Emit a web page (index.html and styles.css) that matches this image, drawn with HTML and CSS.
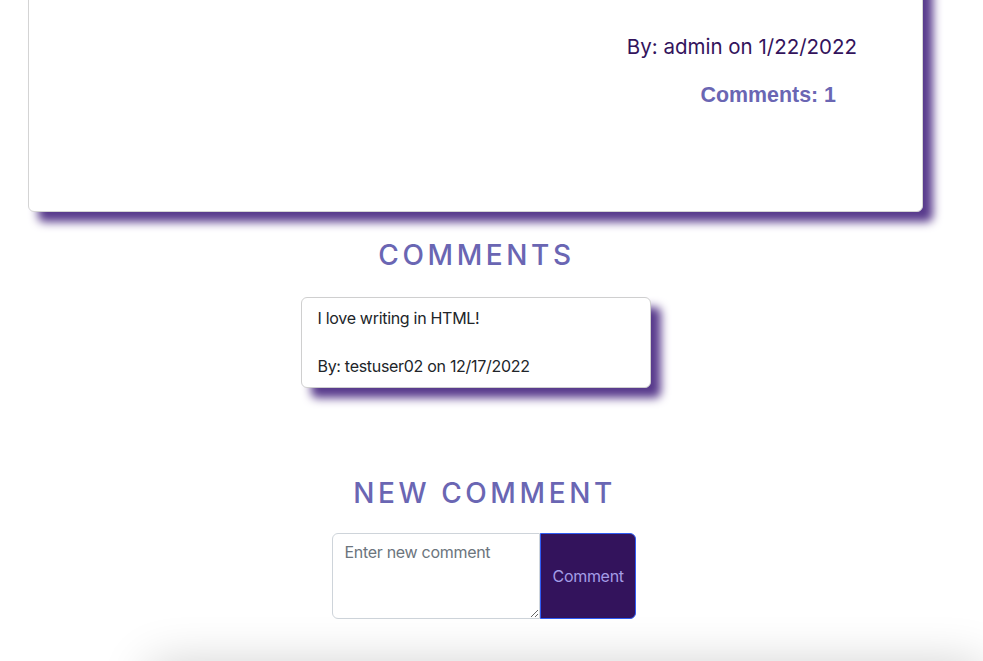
FILE: index.html
```html
<!DOCTYPE html>
<html lang="en">
<head>
<meta charset="utf-8">
<title>Post</title>
<link rel="stylesheet" href="styles.css">
</head>
<body>
<div class="page">
  <div class="container">
    <div class="post-card">
      <div class="post-meta">
        <p class="post-author">By: admin on 1/22/2022</p>
        <p class="comment-count">Comments: 1</p>
      </div>
    </div>
    <h3 class="section-title">COMMENTS</h3>
    <div class="comment-card">
      <p class="comment-text">I love writing in HTML!<br><br>By: testuser02 on 12/17/2022</p>
    </div>
  </div>
  <div class="new-comment">
    <h3 class="section-title">NEW COMMENT</h3>
    <form class="comment-form">
      <textarea class="comment-input" placeholder="Enter new comment"></textarea>
      <button type="button" class="comment-btn">Comment</button>
    </form>
  </div>
  <footer class="footer"></footer>
</div>
</body>
</html>
```

FILE: styles.css
```css
html, body {
  margin: 0;
  padding: 0;
  background: #fff;
}

body {
  font-family: Inter, "Liberation Sans", sans-serif;
  color: #212529;
  height: 661px;
  overflow: hidden;
}

.page {
  display: flex;
  flex-direction: column;
}

.container {
  margin: 0 60px 0 28px;
  display: flex;
  flex-direction: column;
  align-items: center;
}

.post-card {
  align-self: stretch;
  box-sizing: border-box;
  height: 252px;
  margin-top: -40px;
  padding: 71px 65px 0 0;
  background: #fff;
  border: 1px solid #d4d4d4;
  border-radius: 6px;
  box-shadow: 10px 10px 10px rgb(88, 58, 140);
  display: flex;
  justify-content: flex-end;
}

.post-meta {
  display: flex;
  flex-direction: column;
  align-items: flex-end;
}

.post-meta p {
  margin: 0;
  line-height: 30px;
}

.post-author {
  font-family: Inter, "Liberation Sans", sans-serif;
  font-size: 20.5px;
  color: #33135c;
}

.comment-count {
  margin-top: 18px !important;
  margin-right: 21px !important;
  font-family: "Liberation Sans", Arial, sans-serif;
  font-size: 21.4px;
  color: #6a66b3;
  font-weight: 700;
}

.section-title {
  margin: 26px 0 0;
  font-family: Inter, "Liberation Sans", sans-serif;
  font-size: 28px;
  line-height: 34px;
  font-weight: 500;
  letter-spacing: 3.6px;
  color: #6a66b3;
  text-align: center;
  padding-left: 2px;
}

.comment-card {
  box-sizing: border-box;
  width: 350px;
  margin-top: 25px;
  padding: 8px 16px 9px;
  background: #fff;
  border: 1px solid #cfcfcf;
  border-radius: 6px;
  box-shadow: 10px 10px 10px rgb(88, 58, 140);
}

.comment-text {
  margin: 0;
  font-size: 16px;
  line-height: 24px;
  letter-spacing: -0.3px;
  color: #212529;
}

.new-comment {
  margin: 0 44px 0 28px;
  display: flex;
  flex-direction: column;
  align-items: center;
}

.new-comment .section-title {
  margin-top: 88px;
}

.comment-form {
  display: flex;
  margin-top: 23px;
  height: 86px;
}

.comment-input {
  box-sizing: border-box;
  width: 208px;
  height: 86px;
  margin: 0;
  padding: 6px 12px;
  border: 1px solid #ced4da;
  border-radius: 6px 0 0 6px;
  font-family: Inter, "Liberation Sans", sans-serif;
  font-size: 16px;
  line-height: 24px;
  letter-spacing: -0.3px;
  color: #212529;
  resize: vertical;
  outline: none;
}

.comment-input::placeholder {
  color: #6c757d;
}

.comment-btn {
  box-sizing: border-box;
  width: 96px;
  height: 86px;
  margin: 0;
  padding: 6px 12px;
  background: #33135c;
  color: #a49de6;
  border: 1px solid #2f5cf5;
  border-radius: 0 6px 6px 0;
  font-family: Inter, "Liberation Sans", sans-serif;
  font-size: 16px;
  line-height: 24px;
  letter-spacing: -0.3px;
  cursor: pointer;
}

.footer {
  margin: 46px 0 0 150px;
  height: 80px;
  background: #fff;
  box-shadow: 0 0 50px rgba(0, 0, 0, 0.2);
}
```
